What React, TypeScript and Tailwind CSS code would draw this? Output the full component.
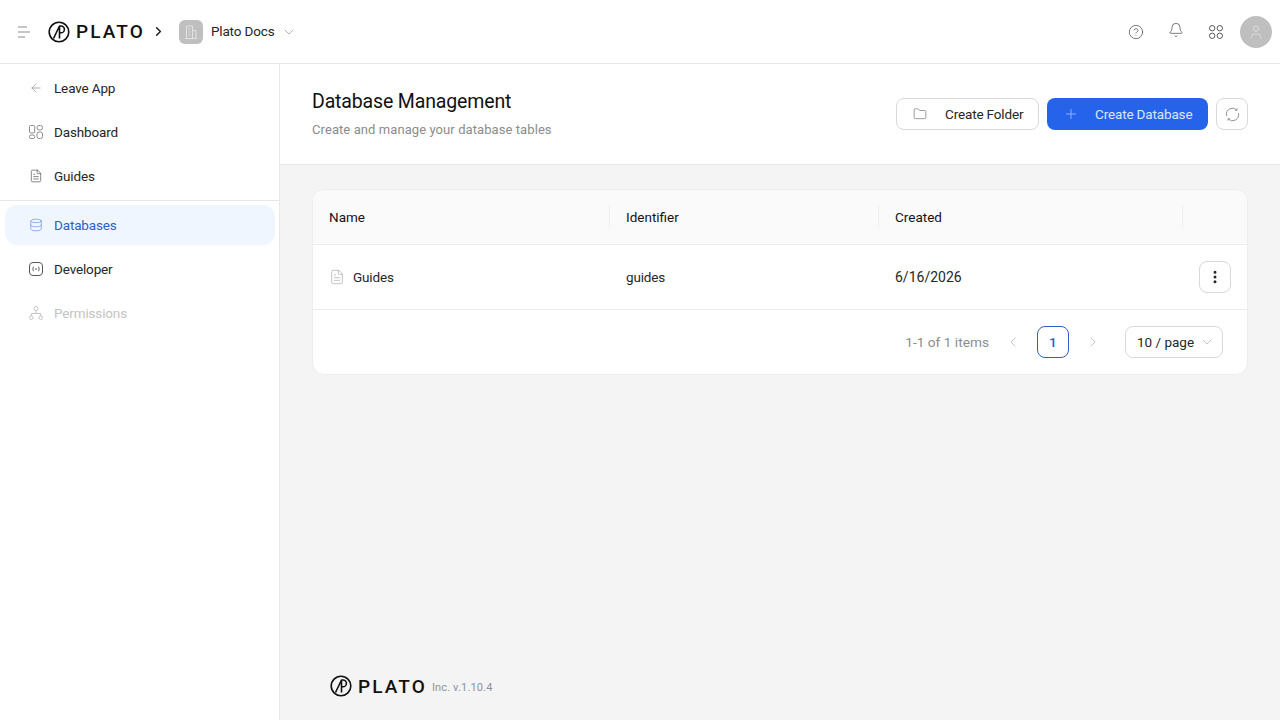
import { ArrowLeft, Bell, ChevronDown, ChevronLeft, ChevronRight, CircleHelp, Database, EllipsisVertical, FileText, Folder, Plus, User } from 'lucide-react';

const font = { fontFamily: 'Roboto, sans-serif' };

function PlatoLogo() {
    return (
        <div className="flex items-center gap-[6px]">
            <svg width="22" height="22" viewBox="0 0 22 22" fill="none" stroke="#111" strokeWidth="1.6">
                <circle cx="11" cy="11" r="9.8" />
                <path d="M5.5 17.5 11.5 5v12.5M11.5 5H13a3.4 3.4 0 0 1 0 6.8h-1.5" strokeLinejoin="round" />
            </svg>
            <span className="text-[19px] leading-none font-medium tracking-[2.1px] text-[#111]">PLATO</span>
        </div>
    );
}

function GridIcon({ className }: { className?: string }) {
    return (
        <svg className={className} viewBox="0 0 16 16" fill="none" stroke="currentColor" strokeWidth="1">
            <circle cx="4.2" cy="4.2" r="2.7" />
            <circle cx="11.8" cy="4.2" r="2.7" />
            <circle cx="4.2" cy="11.8" r="2.7" />
            <circle cx="11.8" cy="11.8" r="2.7" />
        </svg>
    );
}

function DashIcon() {
    return (
        <svg className="w-[14px] h-[14px] text-[#8c8c8c]" viewBox="0 0 14 14" fill="none" stroke="currentColor" strokeWidth="1">
            <rect x="0.5" y="0.5" width="5.2" height="7.4" rx="1" />
            <rect x="8" y="0.5" width="5.5" height="4.4" rx="2" />
            <rect x="0.5" y="10" width="5.2" height="3.5" rx="1.5" />
            <rect x="8" y="7" width="5.5" height="6.5" rx="2" />
        </svg>
    );
}

function DevIcon() {
    return (
        <svg className="w-[14px] h-[14px] text-[#595959]" viewBox="0 0 14 14" fill="none" stroke="currentColor" strokeWidth="1">
            <rect x="0.5" y="0.5" width="13" height="13" rx="3.5" />
            <path d="M5 4.8c-1 .3-1 1-1 2.2s0 1.9 1 2.2M9 4.8c1 .3 1 1 1 2.2s0 1.9-1 2.2" />
            <circle cx="7" cy="7" r="0.4" />
        </svg>
    );
}

function PermIcon() {
    return (
        <svg className="w-[14px] h-[14px] text-[#c4c4c4]" viewBox="0 0 14 14" fill="none" stroke="currentColor" strokeWidth="1">
            <circle cx="7" cy="2.5" r="2" />
            <circle cx="2.3" cy="11.7" r="1.8" />
            <circle cx="11.7" cy="11.7" r="1.8" />
            <path d="M7 4.5v3M2.3 9.9V7.5h9.4v2.4" />
        </svg>
    );
}

function SyncIcon() {
    return (
        <svg className="w-[15px] h-[15px] text-[#8c8c8c]" viewBox="0 0 16 16" fill="none" stroke="currentColor" strokeWidth="1">
            <path d="M1.8 9.5A6.4 6.4 0 0 1 12.5 3.2" />
            <path d="M14.2 6.5A6.4 6.4 0 0 1 3.5 12.8" />
            <path d="M12.8 1.5v2h-2M3.2 14.5v-2h2" />
        </svg>
    );
}

function NavItem({ icon, label, active, disabled }: { icon: React.ReactNode; label: string; active?: boolean; disabled?: boolean }) {
    return (
        <div className={`flex items-center gap-[11px] h-10 ml-[5px] mr-[4px] pl-[24px] rounded-xl text-[13.5px] tracking-[-0.15px] ${active ? 'bg-[#eff6ff] text-[#2f5fc4]' : disabled ? 'text-[#c4c4c4]' : 'text-[#262626]'}`}>
            {icon}
            <span>{label}</span>
        </div>
    );
}

export default function App() {
    return (
        <div className="h-screen flex flex-col bg-white overflow-hidden" style={font}>
            {/* Top bar */}
            <header className="h-16 shrink-0 flex items-center border-b border-[#e8e8e8] pl-[18px] pr-[8px]">
                <svg className="w-[12px] h-[12px] text-[#8c8c8c] mr-[18px]" viewBox="0 0 12 12" stroke="currentColor" strokeWidth="1">
                    <path d="M0 1h9M0 6h12M0 11h7" />
                </svg>
                <PlatoLogo />
                <ChevronRight className="w-[15px] h-[15px] ml-[6px] text-[#222]" strokeWidth={2.5} />
                <div className="w-6 h-6 rounded-md bg-[#bfbfbf] ml-[13px] flex items-center justify-center">
                    <svg className="w-[14px] h-[14px] text-[#e2e2e2]" viewBox="0 0 14 14" fill="none" stroke="currentColor" strokeWidth="1">
                        <path d="M1 13.5h12M2.5 13.5V1h6v12.5M8.5 5.5H12v8M4.500 4h2M4.500 7h2M4.500 10h2" />
                    </svg>
                </div>
                <span className="ml-2 text-[13.5px] tracking-[-0.15px] text-[#262626]">Plato Docs</span>
                <ChevronDown className="w-4 h-4 ml-[7px] text-[#8c8c8c]" strokeWidth={1} />
                <div className="ml-auto flex items-center">
                    <CircleHelp className="w-4 h-4 text-[#595959]" strokeWidth={1.2} />
                    <Bell className="w-4 h-4 ml-6 -mt-[3px] text-[#595959]" strokeWidth={1.2} />
                    <GridIcon className="w-4 h-4 ml-6 text-[#595959]" />
                    <div className="w-8 h-8 rounded-full bg-[#bfbfbf] ml-4 flex items-center justify-center">
                        <User className="w-4 h-4 text-[#e2e2e2]" strokeWidth={1.2} />
                    </div>
                </div>
            </header>

            <div className="flex-1 flex min-h-0">
                {/* Sidebar */}
                <aside className="w-[280px] shrink-0 border-r border-[#e8e8e8] pt-[4px]">
                    <div className="flex flex-col gap-[4px]">
                        <NavItem icon={<ArrowLeft className="w-[14px] h-[14px] text-[#8c8c8c]" strokeWidth={1.2} />} label="Leave App" />
                        <NavItem icon={<DashIcon />} label="Dashboard" />
                        <NavItem icon={<FileText className="w-[14px] h-[14px] text-[#595959]" strokeWidth={1.2} />} label="Guides" />
                    </div>
                    <div className="border-t border-[#e8e8e8] mt-[4px] pt-[4px] flex flex-col gap-[4px]">
                        <NavItem active icon={<Database className="w-[14px] h-[14px] text-[#6f94dc]" strokeWidth={1.2} />} label="Databases" />
                        <NavItem icon={<DevIcon />} label="Developer" />
                        <NavItem disabled icon={<PermIcon />} label="Permissions" />
                    </div>
                </aside>

                {/* Main */}
                <main className="flex-1 flex flex-col bg-[#f4f4f4] min-w-0">
                    <div className="h-[101px] shrink-0 bg-white border-b border-[#e8e8e8] flex items-center justify-between pl-8 pr-8">
                        <div>
                            <h1 className="text-[19.5px] leading-[26px] font-normal tracking-[-0.15px] text-[#111]">Database Management</h1>
                            <p className="mt-[5px] text-[13px] leading-[20px] tracking-[0.08px] text-[#8c8c8c]">Create and manage your database tables</p>
                        </div>
                        <div className="flex items-center gap-2">
                            <button className="h-8 w-[143px] flex items-center pl-4 gap-[18px] rounded-lg border border-[#d9d9d9] bg-white text-[13.5px] tracking-[-0.15px] text-[#262626]">
                                <Folder className="w-[14px] h-[14px] text-[#595959]" strokeWidth={1} />
                                Create Folder
                            </button>
                            <button className="h-8 w-[161px] flex items-center pl-4 gap-[16px] rounded-lg bg-[#2563eb] text-[13.5px] tracking-[-0.15px] text-[#dbe7fd]">
                                <Plus className="w-4 h-4 text-[#a9c3f7]" strokeWidth={1.2} />
                                Create Database
                            </button>
                            <button className="h-8 w-8 flex items-center justify-center rounded-lg border border-[#d9d9d9] bg-white">
                                <SyncIcon />
                            </button>
                        </div>
                    </div>

                    <div className="px-8 pt-6">
                        <div className="rounded-xl border border-[#ededed] bg-white overflow-hidden">
                            <div className="grid grid-cols-[297px_269px_304px_1fr] h-[55px] items-center bg-[#fafafa] border-b border-[#ededed] text-[13.5px] font-normal text-[#141414]">
                                <div className="px-4 border-r border-[#efefef] leading-[22px]">Name</div>
                                <div className="px-4 border-r border-[#efefef] leading-[22px]">Identifier</div>
                                <div className="px-4 border-r border-[#efefef] leading-[22px]">Created</div>
                                <div />
                            </div>
                            <div className="grid grid-cols-[297px_269px_304px_1fr] h-[65px] items-center border-b border-[#ededed] text-[13.5px] tracking-[-0.15px] text-[#262626]">
                                <div className="px-4 flex items-center gap-[8px]">
                                    <FileText className="w-4 h-4 text-[#a6a6a6]" strokeWidth={1} />
                                    Guides
                                </div>
                                <div className="px-4">guides</div>
                                <div className="px-4 text-[14px] tracking-normal">6/16/2026</div>
                                <div className="flex justify-end pr-4">
                                    <button className="w-8 h-8 flex items-center justify-center rounded-lg border border-[#d9d9d9]">
                                        <EllipsisVertical className="w-4 h-4 text-[#262626]" strokeWidth={2.5} />
                                    </button>
                                </div>
                            </div>
                            <div className="h-[64px] flex items-center justify-end pr-[24px] text-[13.7px]">
                                <span className="text-[#8c8c8c]">1-1 of 1 items</span>
                                <ChevronLeft className="w-4 h-4 ml-4 text-[#a6a6a6]" strokeWidth={1} />
                                <div className="w-8 h-8 ml-4 flex items-center justify-center rounded-lg border border-[#2f5fc4] text-[#2f5fc4] font-medium">1</div>
                                <ChevronRight className="w-4 h-4 ml-4 text-[#a6a6a6]" strokeWidth={1} />
                                <div className="w-[98px] h-8 ml-6 flex items-center pl-[11px] rounded-lg border border-[#d9d9d9] text-[13.5px] text-[#262626]">
                                    10 / page
                                    <ChevronDown className="w-4 h-4 ml-[5px] text-[#a6a6a6]" strokeWidth={1} />
                                </div>
                            </div>
                        </div>
                    </div>

                    <footer className="mt-auto h-[46px] flex items-start pl-[50px] pt-[1px] gap-[5px]">
                        <PlatoLogo />
                        <span className="text-[11px] tracking-[0.15px] text-[#8a93a3] mt-[5px]">Inc. v.1.10.4</span>
                    </footer>
                </main>
            </div>
        </div>
    );
}
